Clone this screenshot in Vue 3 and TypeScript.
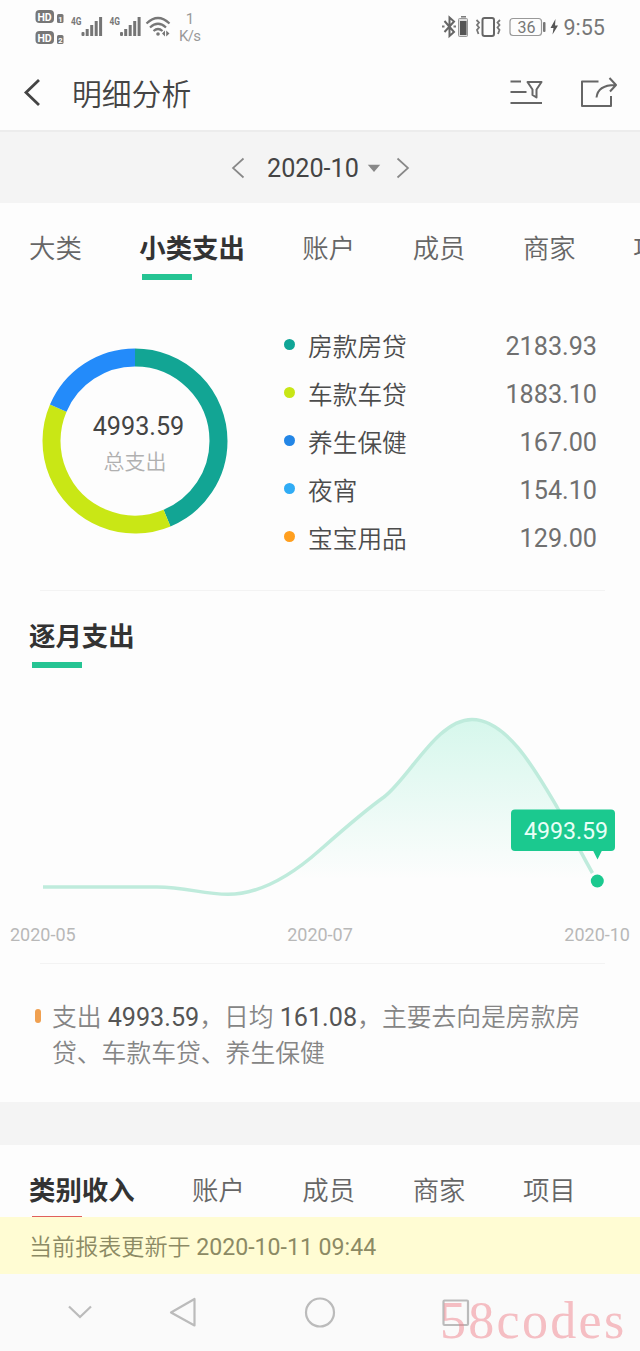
<script setup lang="ts">
interface Category {
  name: string
  amount: string
  color: string
}

const expenseTabs: string[] = ['大类', '小类支出', '账户', '成员', '商家', '项目']
const incomeTabs: string[] = ['类别收入', '账户', '成员', '商家', '项目']

const categories: Category[] = [
  { name: '房款房贷', amount: '2183.93', color: '#0fa596' },
  { name: '车款车贷', amount: '1883.10', color: '#c8e616' },
  { name: '养生保健', amount: '167.00', color: '#2386e6' },
  { name: '夜宵', amount: '154.10', color: '#30acf5' },
  { name: '宝宝用品', amount: '129.00', color: '#ff9f1f' },
]

const total = 4993.59
const slices = [
  { share: 2183.93 / total, start: 0, color: '#12a594' },
  { share: 1883.1 / total, start: 2183.93 / total, color: '#c9e715' },
  { share: 926.56 / total, start: 4067.03 / total, color: '#238bfa' },
]

const months: string[] = ['2020-05', '2020-07', '2020-10']
const curve =
  'M43 207H157C186 207 203 214.3 228 214.3C262 214.3 293 194 320 170C345 148 363 132 384 117C410 97 437 39.500 472 39.500C508 39.500 538 95 557 127C571 152 579 170 597 201'
</script>

<template>
  <main class="screen">
    <header class="status">
      <svg class="status-left" width="180" height="48" viewBox="30 0 180 48">
        <g v-for="y in [10, 31]" :key="y">
          <rect x="35.5" :y="y" width="18.5" height="13" rx="4" fill="#777" />
          <text x="37.5" :y="y + 10.5" class="hd" textLength="14">HD</text>
          <rect x="57" :y="y + 4" width="6.5" height="9" rx="1.5" fill="#777" />
        </g>
        <text x="58.2" y="21.5" class="sim">1</text>
        <text x="58.2" y="42.5" class="sim">2</text>
        <g v-for="x in [71, 109.5]" :key="x">
          <text :x="x" y="25" class="net" textLength="10.5" lengthAdjust="spacingAndGlyphs">4G</text>
          <g :transform="`translate(${x + 10.5} 0)`" fill="#757575">
            <rect x="0" y="32" width="3" height="4" rx="1" />
            <rect x="4.2" y="29" width="3" height="7" />
            <rect x="8.7" y="25" width="3" height="11" />
            <rect x="13.2" y="21" width="3" height="15" />
            <rect x="17.6" y="17" width="3" height="19" />
          </g>
        </g>
        <g fill="none" stroke="#777" stroke-width="2.2">
          <path d="M146.500 23.500Q158 12.500 169.500 23.500" />
          <path d="M150 27.500Q158 20 166 27.500" />
          <path d="M153.500 31Q158 27 162.500 31" />
        </g>
        <circle cx="158" cy="34" r="1.8" fill="#777" />
        <path d="M162 33.500L165 30.500V36.500ZM169.500 33.500L166.200 30.500V36.500Z" fill="#777" />
        <text x="190" y="24" class="rate" text-anchor="middle">1</text>
        <text x="179" y="41" class="rate" textLength="22">K/s</text>
      </svg>
      <svg class="status-right" width="170" height="48" viewBox="440 0 170 48">
        <path d="M444.500 21L454 32L449.500 36V17.500L454 21.500L444.500 32" fill="none" stroke="#666" stroke-width="2" />
        <path d="M442 26.500H444.500M453.500 26.500H456" stroke="#777" stroke-width="2" />
        <rect x="458.500" y="18.500" width="9" height="18" rx="1" fill="#ddd" stroke="#999" />
        <rect x="460" y="21" width="6.500" height="14" fill="#555" />
        <path d="M461 16.800H466" stroke="#777" stroke-width="1.500" />
        <rect x="482.500" y="18" width="11.500" height="18" rx="2" fill="none" stroke="#666" stroke-width="2" />
        <path d="M476.500 20L479 22.500L477 25L479 27.500L477 30L478.500 34M500 20L497.500 22.500L499.500 25L497.500 27.500L499.500 30L498 34" fill="none" stroke="#777" stroke-width="1.800" />
        <rect x="510" y="18.500" width="31.500" height="17" rx="3" fill="none" stroke="#999" stroke-width="1.200" />
        <rect x="543" y="22" width="2.500" height="10" rx="1" fill="#777" />
        <text x="517.500" y="32.800" class="level">36</text>
        <path d="M555.500 19L550.500 28H553.500L552.500 34.500L558 25.500H555Z" fill="#555" />
        <text x="563.500" y="34.500" class="clock">9:55</text>
      </svg>
    </header>

    <nav class="title-bar">
      <svg class="back" width="20" height="30" viewBox="0 0 20 30">
        <path d="M17 2L4 14.500L17 27" fill="none" stroke="#444" stroke-width="2.800" />
      </svg>
      <h1>明细分析</h1>
      <svg class="filter" width="36" height="30" viewBox="0 0 36 30">
        <g fill="none" stroke="#666" stroke-width="2">
          <path d="M1.500 3.500H12M1.500 14H17.500M1.500 25H33" />
          <path d="M18.500 4H32.500L27.500 11.500V19.500L23.500 17V11.500Z" stroke-linejoin="round" />
        </g>
      </svg>
      <svg class="share" width="40" height="34" viewBox="0 0 40 34">
        <path d="M19.500 5.500H3V30H32V20M17.500 21.500C18.500 13 25 9 36 9M30.500 2L37 9L31 15.500" fill="none" stroke="#666" stroke-width="2" stroke-linejoin="round" />
      </svg>
    </nav>

    <section class="period">
      <svg width="14" height="22" viewBox="0 0 14 22"><path d="M12.500 1.500L2 11L12.500 20.500" fill="none" stroke="#888" stroke-width="1.700" /></svg>
      <span class="month">2020-10</span>
      <svg width="14" height="9" viewBox="0 0 14 9"><path d="M.8 .8H13.200L7 8Z" fill="#888" /></svg>
      <svg class="next" width="14" height="22" viewBox="0 0 14 22"><path d="M1.500 1.500L12 11L1.500 20.500" fill="none" stroke="#888" stroke-width="1.700" /></svg>
    </section>

    <ul class="tabs">
      <li v-for="(tab, i) in expenseTabs" :key="tab" :class="{ active: i === 1 }">{{ tab }}</li>
    </ul>

    <section class="breakdown">
      <div class="donut">
        <svg width="186" height="186" viewBox="-93 -93 186 186">
          <circle
            v-for="s in slices"
            :key="s.color"
            r="83.5"
            fill="none"
            :stroke="s.color"
            stroke-width="18"
            pathLength="1"
            :stroke-dasharray="`${s.share} 1`"
            :transform="`rotate(${s.start * 360 - 90})`"
          />
        </svg>
        <div class="donut-label">
          <strong>4993.59</strong>
          <span>总支出</span>
        </div>
      </div>
      <ul class="legend">
        <li v-for="c in categories" :key="c.name">
          <i :style="{ background: c.color }"></i>
          <span>{{ c.name }}</span>
          <b>{{ c.amount }}</b>
        </li>
      </ul>
    </section>

    <hr />

    <h2>逐月支出</h2>

    <section class="trend">
      <svg width="640" height="232" viewBox="0 0 640 232">
        <defs>
          <linearGradient id="area" gradientUnits="userSpaceOnUse" x1="0" y1="39" x2="0" y2="200">
            <stop offset="0" stop-color="#18d998" stop-opacity=".17" />
            <stop offset="1" stop-color="#18d998" stop-opacity="0" />
          </linearGradient>
        </defs>
        <path :d="`${curve}V207H43Z`" fill="url(#area)" />
        <path :d="curve" fill="none" stroke="#bfebdc" stroke-width="3.500" />
        <circle cx="597.300" cy="201" r="9.500" fill="#fdfdfd" />
        <circle cx="597.300" cy="201" r="6.500" fill="#1bc98f" />
        <rect x="511" y="129.500" width="104" height="41.500" rx="4" fill="#1bc98f" />
        <path d="M593 170.500H602L597.500 179.500Z" fill="#1bc98f" />
        <text x="524" y="159" class="tip" textLength="84">4993.59</text>
      </svg>
      <div class="axis">
        <span v-for="m in months" :key="m">{{ m }}</span>
      </div>
    </section>

    <hr class="lower" />

    <section class="summary">
      <i></i>
      <p>支出 <b>4993.59</b>，日均 <b>161.08</b>，主要去向是房款房贷、车款车贷、养生保健</p>
    </section>

    <ul class="tabs income">
      <li v-for="(tab, i) in incomeTabs" :key="tab" :class="{ active: i === 0 }">{{ tab }}</li>
    </ul>

    <p class="notice">当前报表更新于 <span>2020-10-11 09:44</span></p>

    <footer class="system-nav">
      <svg width="640" height="77" viewBox="0 0 640 77">
        <g fill="none" stroke="#bbb" stroke-width="2.200">
          <path d="M69 32.500L80 43L91 32.500" />
          <path d="M194.500 25V51.500L171 38.500Z" stroke-linejoin="round" />
          <circle cx="320" cy="38.500" r="14" />
          <rect x="443.500" y="26.500" width="24.500" height="24.500" rx="1" />
        </g>
      </svg>
      <span class="watermark">58codes</span>
    </footer>
  </main>
</template>

<style>
body {
  margin: 0;
  background: #fdfdfd;
}
</style>

<style scoped>
.screen {
  width: 640px;
  height: 1351px;
  overflow: hidden;
  display: flex;
  flex-direction: column;
  background: #fdfdfd;
  color: #666;
  font-family: Roboto, "Noto Sans CJK SC", sans-serif;
}

.screen > * {
  flex: none;
  box-sizing: border-box;
}

svg {
  display: block;
  flex: none;
}

ul {
  list-style: none;
  margin: 0;
  padding: 0;
}

.status {
  height: 56px;
  display: flex;
  justify-content: space-between;
  padding: 0 30px;
}

.hd {
  font-size: 10.5px;
  font-weight: 700;
  fill: #fff;
}

.sim {
  font-size: 7.5px;
  font-weight: 700;
  fill: #fff;
}

.net {
  font-size: 11px;
  font-weight: 700;
  fill: #777;
}

.rate {
  font-size: 15px;
  fill: #999;
}

.level {
  font-size: 16px;
  fill: #777;
}

.clock {
  font-size: 21.500px;
  fill: #777;
}

.title-bar {
  height: 76px;
  padding: 0 21px 0 22px;
  display: flex;
  align-items: center;
  border-bottom: 2px solid #ececec;
}

h1 {
  margin: 0 auto 0 30px;
  padding-top: 4px;
  font-size: 29.800px;
  line-height: 40px;
  font-weight: 350;
  color: #444;
}

.filter {
  margin-right: 34px;
}

.period {
  height: 71px;
  display: flex;
  align-items: center;
  padding-left: 231px;
  padding-top: 1px;
  background: #f4f4f4;
}

.month {
  margin: 0 8px 0 22px;
  font-size: 25.200px;
  color: #444;
}

.next {
  margin-left: 15px;
}

.tabs {
  height: 97px;
  padding: 25px 0 0 29px;
  display: flex;
  gap: 57.500px;
  overflow: hidden;
}

.tabs li {
  flex: none;
  font-size: 26.400px;
  line-height: 43px;
  font-weight: 350;
  white-space: nowrap;
}

.tabs li.active,
h2 {
  font-weight: 700;
  color: #333;
}

.tabs .active::after,
h2::after {
  content: "";
  display: block;
  width: 50px;
  height: 5.500px;
  margin: 3px 0 0 3px;
  background: #25c493;
}

.breakdown {
  height: 290px;
  padding: 22px 43px 0 42px;
  display: flex;
}

.donut {
  display: grid;
  width: 186px;
  height: 186px;
  margin-top: 26px;
}

.donut > * {
  grid-area: 1 / 1;
}

.donut-label {
  display: flex;
  flex-direction: column;
  align-items: center;
  padding-top: 61px;
}

.donut-label strong {
  font-size: 25.200px;
  line-height: 36px;
  font-weight: 400;
  color: #444;
  margin-left: 7px;
}

.donut-label span {
  font-size: 21px;
  line-height: 34px;
  font-weight: 350;
  color: #b0b0b0;
}

.legend {
  flex: 1;
  margin-left: 56px;
}

.legend li {
  height: 48px;
  display: flex;
  align-items: center;
}

.legend i {
  width: 11px;
  height: 11px;
  margin-top: -3px;
  border-radius: 50%;
}

.legend span {
  margin: 3px 0 0 13px;
  font-size: 24.700px;
  line-height: 36px;
  font-weight: 350;
  color: #4c4c4c;
}

.legend b {
  margin: 2px 0 0 auto;
  font-size: 25.200px;
  line-height: 36px;
  font-weight: 400;
  color: #707070;
}

hr {
  width: 565px;
  height: 1px;
  margin: 0 0 0 40px;
  border: 0;
  background: #f3f3f3;
}

h2 {
  height: 89px;
  margin: 0;
  padding: 25px 0 0 29px;
  font-size: 26.400px;
  line-height: 43px;
}

.trend {
  height: 283px;
}

.tip {
  font-size: 23.200px;
  fill: #e9fff7;
}

.axis {
  display: flex;
  justify-content: space-between;
  padding: 11px 10px 0;
  font-size: 18px;
  line-height: 24px;
  color: #b8b8b8;
}

.summary {
  height: 138px;
  display: flex;
  padding: 36px 40px 0 35px;
}

.summary i {
  width: 6px;
  height: 14px;
  margin-top: 9px;
  border-radius: 3px;
  background: #f0a050;
}

.summary p {
  margin: 0 0 0 11px;
  width: 536px;
  font-size: 24.800px;
  line-height: 36px;
  font-weight: 350;
  color: #858585;
}

.summary b {
  font-weight: 400;
  font-size: 25.200px;
  line-height: 30px;
  color: #555;
}

.income {
  height: 115px;
  padding-top: 25px;
  border-top: 43px solid #f4f4f4;
}

.income .active::after {
  background: #e0605c;
}

.notice {
  height: 57px;
  margin: 0;
  padding-left: 29px;
  font-size: 23.100px;
  line-height: 61px;
  font-weight: 350;
  color: #8c8a64;
  background: #fffcd3;
}

.notice span {
  font-weight: 400;
}

.system-nav {
  height: 77px;
  position: relative;
  background: #fafafa;
}

.watermark {
  position: absolute;
  left: 440px;
  top: 17px;
  font-family: "Liberation Serif", serif;
  font-size: 52px;
  line-height: 60px;
  letter-spacing: 2.300px;
  color: rgba(240, 130, 140, .5);
}
</style>
